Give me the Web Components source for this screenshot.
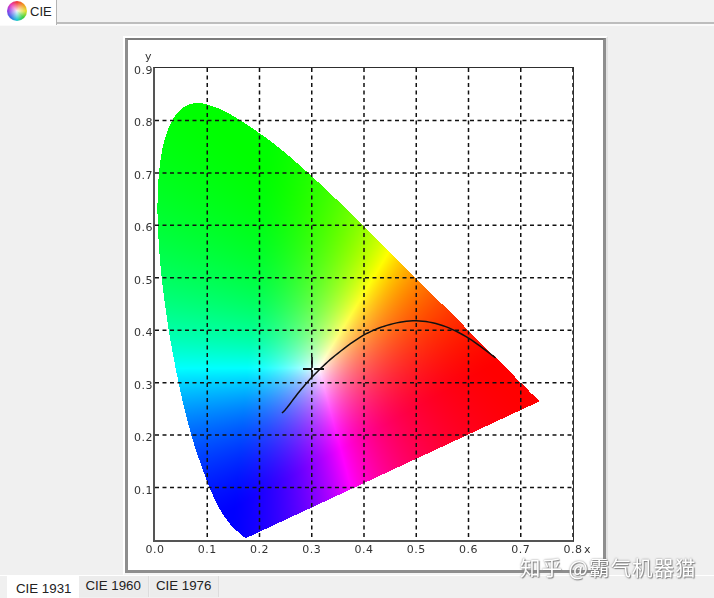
<!DOCTYPE html>
<html>
<head>
<meta charset="utf-8">
<style>
  html, body { margin: 0; height: 100%; background: #f0f0f0; overflow: hidden; }
  body { font-family: "Liberation Sans", sans-serif; }
</style>
</head>
<body>
<cie-window>
  <top-tabs slot="top"><span>CIE</span></top-tabs>
  <plot-frame><cie-plot></cie-plot></plot-frame>
  <bottom-tabs slot="bottom">
    <tab-button active>CIE 1931</tab-button>
    <tab-button>CIE 1960</tab-button>
    <tab-button>CIE 1976</tab-button>
  </bottom-tabs>
  <water-mark slot="over">知乎 @霸气机器猫</water-mark>
</cie-window>

<script>
class CieWindow extends HTMLElement {
  constructor() {
    super();
    this.attachShadow({ mode: 'open' }).innerHTML = `
      <style>
        :host { display: flex; flex-direction: column; width: 714px; height: 598px; position: relative; overflow: hidden; background: #f0f0f0; }
        main { flex: 1; padding: 12px 0 0 123px; }
      </style>
      <slot name="top"></slot>
      <main><slot></slot></main>
      <slot name="bottom"></slot>
      <slot name="over"></slot>`;
  }
}

class TopTabs extends HTMLElement {
  constructor() {
    super();
    this.attachShadow({ mode: 'open' }).innerHTML = `
      <style>
        :host { display: flex; height: 24px; box-sizing: border-box; border-bottom: 2px solid #bdbdbd; background: #f2f2f2; box-shadow: 0 2px 0 #fafafa; }
        .tab { display: flex; align-items: center; gap: 3px; width: 57px; height: 25px; box-sizing: border-box; padding: 0 0 3px 7px; background: #fff; border-right: 1px solid #b4b4b4; font: 13px "Liberation Sans", sans-serif; color: #222; }
        .wheel { width: 20px; height: 20px; border-radius: 50%; background: radial-gradient(circle, rgba(255,255,255,.9) 0, rgba(255,255,255,0) 62%), conic-gradient(#f03a3a, #f09a20, #e4e030, #3cd03c, #20c8d0, #3a70e8, #8a40e8, #e83ab8, #f03a3a); }
      </style>
      <div class="tab"><div class="wheel"></div><slot></slot></div>`;
  }
}

class PlotFrame extends HTMLElement {
  constructor() {
    super();
    this.attachShadow({ mode: 'open' }).innerHTML = `
      <style>
        :host { display: block; width: 485px; height: 539px; box-sizing: border-box; border: 2px solid #fff; border-right-color: #e2e2e2; border-bottom-color: #f4f4f4; }
        .in { box-sizing: border-box; height: 100%; background: #fff; border: solid #8e8e8e; border-width: 2px 3px 3px 3px; border-top-color: #7c7c7c; padding: 28px 0 0 27px; }
      </style>
      <div class="in"><slot></slot></div>`;
  }
}

// CIE 1931 spectral locus, 380nm to 700nm
const LOCUS = [[.1741,.005],[.1733,.0048],[.1714,.0051],[.1689,.0069],[.1644,.0109],[.1566,.0177],[.144,.0297],[.1241,.0578],[.1096,.0868],[.0913,.1327],[.0687,.2007],[.0454,.295],[.0235,.4127],[.0082,.5384],[.0039,.6548],[.0139,.7502],[.0389,.812],[.0743,.8338],[.1142,.8262],[.1547,.8059],[.2296,.7543],[.3016,.6923],[.3731,.6245],[.4441,.5547],[.5125,.4866],[.5752,.4242],[.627,.3725],[.6658,.334],[.6915,.3083],[.7079,.292],[.719,.2809],[.726,.274],[.7347,.2653]];
const PLANCK = [[.243,.242],[.2525,.2522],[.2807,.2884],[.3135,.3237],[.35,.356],[.4,.391],[.45,.411],[.5,.418],[.55,.409],[.6,.385],[.652,.347]];
const PW = 418, PH = 472;
const sx = x => x / 0.8 * PW;
const sy = y => PH - y / 0.9 * PH;

function spline(pts, steps) {
  const out = [];
  for (let i = 0; i < pts.length - 1; i++) {
    const p0 = pts[i - 1] || pts[i], p1 = pts[i], p2 = pts[i + 1], p3 = pts[i + 2] || p2;
    for (let s = 0; s < steps; s++) {
      const t = s / steps, t2 = t * t, t3 = t2 * t;
      out.push([0, 1].map(k => 0.5 * (2 * p1[k] + (p2[k] - p0[k]) * t + (2 * p0[k] - 5 * p1[k] + 4 * p2[k] - p3[k]) * t2 + (3 * p1[k] - p0[k] - 3 * p2[k] + p3[k]) * t3)));
    }
  }
  out.push(pts[pts.length - 1]);
  return out;
}

// xy to wide gamut rgb, negatives clipped, scaled to the largest channel
function xyToRgb(x, y) {
  const X = x / y, Z = (1 - x - y) / y;
  let r = 2.0414 * X - 0.5649 - 0.3447 * Z;
  let g = -0.9693 * X + 1.876 + 0.0416 * Z;
  let b = 0.0134 * X - 0.1184 + 1.0154 * Z;
  r = Math.max(r, 0); g = Math.max(g, 0); b = Math.max(b, 0);
  const m = Math.max(r, g, b);
  return [r, g, b].map(c => 255 * Math.pow(c / m, 1.25));
}

class CiePlot extends HTMLElement {
  constructor() {
    super();
    let labels = '', grid = '';
    for (let i = 0; i <= 8; i++) {
      const v = (i / 10).toFixed(1);
      labels += `<span class="xl" style="left:${sx(i / 10)}px">${v}</span>`;
      if (i) grid += `<path d="M${sx(i / 10)} 0V${PH}"/>`;
    }
    for (let i = 1; i <= 9; i++) {
      labels += `<span class="yl" style="top:${sy(i / 10) + 3}px">${(i / 10).toFixed(1)}</span>`;
      if (i < 9) grid += `<path d="M0 ${sy(i / 10)}H${PW}"/>`;
    }
    this.attachShadow({ mode: 'open' }).innerHTML = `
      <style>
        :host { display: block; position: relative; width: ${PW}px; height: ${PH}px; font: 11px "DejaVu Sans", sans-serif; color: #333; letter-spacing: .5px; }
        .box { position: absolute; inset: 0; }
        canvas { display: block; }
        svg { position: absolute; inset: 0; overflow: visible; }
        .border { position: absolute; inset: -1px; border: solid #2e2e2e; border-width: 1px 1px 2px 2px; border-left-color: #555; border-bottom-color: #555; margin: 0 0 -1px -1px; }
        span { position: absolute; line-height: 12px; white-space: nowrap; }
        .xl { top: 476px; transform: translateX(-50%); }
        .yl { right: 420px; transform: translateY(-50%); }
      </style>
      <div class="box"><canvas width="${PW}" height="${PH}"></canvas></div>
      <svg width="${PW}" height="${PH}" fill="none">
        <g stroke="#111" stroke-width="1.5" stroke-dasharray="4 3.5">${grid}</g>
        <path id="pl" stroke="#111" stroke-width="1.5"/>
        <path d="M148 301H169" stroke="#111" stroke-width="2"/>
        <path d="M157 289V309" stroke="#111" stroke-width="1.7"/>
        <circle cx="158" cy="301" r="1.2" fill="#fff"/>
      </svg>
      <div class="border"></div>
      ${labels}
      <span style="left:-10px;top:-17px">y</span>
      <span style="left:429px;top:476px">x</span>`;
    this.paint();
    this.curve();
  }

  paint() {
    const ctx = this.shadowRoot.querySelector('canvas').getContext('2d');
    const img = ctx.createImageData(PW, PH);
    const poly = spline(LOCUS, 4).map(p => [sx(p[0]), sy(p[1])]);
    for (let py = 0; py < PH; py++) {
      for (let px = 0; px < PW; px++) {
        let inside = false;
        for (let i = 0, j = poly.length - 1; i < poly.length; j = i++) {
          const a = poly[i], b = poly[j];
          if ((a[1] > py) !== (b[1] > py) && px < (b[0] - a[0]) * (py - a[1]) / (b[1] - a[1]) + a[0]) inside = !inside;
        }
        const o = (py * PW + px) * 4;
        if (inside) {
          const c = xyToRgb(px / PW * 0.8, (PH - py) / PH * 0.9);
          img.data[o] = c[0]; img.data[o + 1] = c[1]; img.data[o + 2] = c[2]; img.data[o + 3] = 255;
        }
      }
    }
    ctx.putImageData(img, 0, 0);
  }

  curve() {
    const d = spline(PLANCK, 8).map((p, i) => (i ? 'L' : 'M') + sx(p[0]) + ' ' + sy(p[1])).join('');
    this.shadowRoot.getElementById('pl').setAttribute('d', d);
  }
}

class BottomTabs extends HTMLElement {
  constructor() {
    super();
    this.attachShadow({ mode: 'open' }).innerHTML = `
      <style>
        :host { display: flex; align-items: flex-start; height: 24px; box-sizing: border-box; padding-left: 7px; border-top: 1px solid #fff; }
      </style>
      <slot></slot>`;
  }
}

class TabButton extends HTMLElement {
  constructor() {
    super();
    this.attachShadow({ mode: 'open' }).innerHTML = `
      <style>
        :host { display: block; box-sizing: content-box; height: 19px; padding: 2px 7px 0 6px; margin-right: 1px; background: #ececec; border-right: 1px solid #dcdcdc; font: 13.3px/16px "Liberation Sans", sans-serif; color: #222; white-space: nowrap; }
        :host([active]) { height: 19px; padding: 5px 8px 0 9px; margin-right: 0; background: #fff; border-right: 0; }
      </style>
      <slot></slot>`;
  }
}

class WaterMark extends HTMLElement {
  constructor() {
    super();
    this.attachShadow({ mode: 'open' }).innerHTML = `
      <style>
        :host { position: absolute; left: 520px; top: 555px; font: 20.5px/24px "Noto Sans CJK SC", "Liberation Sans", sans-serif; letter-spacing: 1px; color: #fff; white-space: nowrap; text-shadow: 0 0 2px #777, 1px 1px 1px #888; }
      </style>
      <slot></slot>`;
  }
}

customElements.define('cie-window', CieWindow);
customElements.define('top-tabs', TopTabs);
customElements.define('plot-frame', PlotFrame);
customElements.define('cie-plot', CiePlot);
customElements.define('bottom-tabs', BottomTabs);
customElements.define('tab-button', TabButton);
customElements.define('water-mark', WaterMark);
</script>
</body>
</html>
